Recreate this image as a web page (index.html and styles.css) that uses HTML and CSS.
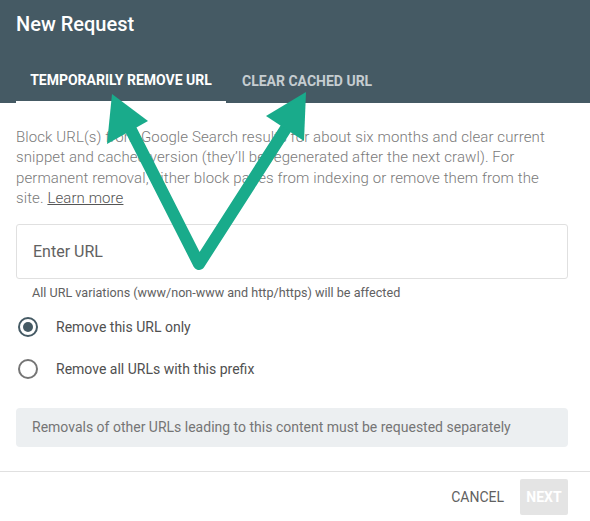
FILE: index.html
```html
<!DOCTYPE html>
<html lang="en">
<head>
<meta charset="UTF-8">
<meta name="viewport" content="width=device-width, initial-scale=1.0">
<title>New Request</title>
<link rel="stylesheet" href="styles.css">
</head>
<body>
<div class="dialog">
  <div class="header">
    <h1>New Request</h1>
    <div class="tabs">
      <div class="tab active">Temporarily remove URL</div>
      <div class="tab">Clear cached URL</div>
    </div>
  </div>

  <div class="content">
    <p class="intro">Block URL(s) from Google Search results for about six months and clear current snippet and cached version (they’ll be regenerated after the next crawl). For permanent removal, either block pages from indexing or remove them from the site. <a href="#">Learn more</a></p>

    <div class="url-field">Enter URL</div>
    <div class="hint">All URL variations (www/non-www and http/https) will be affected</div>

    <div class="options">
      <label class="radio-row"><span class="radio checked"></span>Remove this URL only</label>
      <label class="radio-row"><span class="radio"></span>Remove all URLs with this prefix</label>
    </div>

    <div class="notice">Removals of other URLs leading to this content must be requested separately</div>
  </div>

  <div class="footer">
    <button class="btn-text">Cancel</button>
    <button class="btn-next">Next</button>
  </div>
</div>

<!-- annotation arrows drawn over the dialog -->
<svg class="arrows" width="590" height="521" viewBox="0 0 590 521">
  <polyline points="128,124 199,264 290,122" fill="none" stroke="#19ab8b" stroke-width="12" stroke-linejoin="round" stroke-linecap="round"/>
  <polygon points="112,94 148,121 107,144" fill="#19ab8b"/>
  <polygon points="306,92 304,141 266,116" fill="#19ab8b"/>
</svg>
</body>
</html>
```
FILE: styles.css
```css
body {
  margin: 0;
  padding: 0;
  font-family: Roboto, "Liberation Sans", sans-serif;
  background-color: #fff;
}
.dialog {
  width: 590px;
  height: 521px;
  display: flex;
  flex-direction: column;
}
.header {
  background-color: #455a64;
  padding: 0 16px;
  height: 103px;
  display: flex;
  flex-direction: column;
  justify-content: space-between;
}
h1 {
  margin: 0;
  padding-top: 12px;
  font-size: 20px;
  font-weight: 500;
  color: #fff;
  line-height: 24px;
}
.tabs {
  display: flex;
}
.tab {
  text-transform: uppercase;
  font-size: 14px;
  font-weight: 700;
  color: #c5cdd1;
  padding: 0 16px;
  height: 46px;
  line-height: 48px;
  box-sizing: border-box;
}
.tab.active {
  color: #fff;
  width: 210px;
  text-align: center;
  padding: 0;
  border-bottom: 2px solid #fff;
  line-height: 46px;
}
.content {
  padding: 0 22px 0 16px;
  flex: 1;
}
.intro {
  margin: 24px 0 0;
  font-size: 15px;
  font-weight: 300;
  letter-spacing: 0.1px;
  line-height: 20.4px;
  color: #7a7a7a;
}
.intro a {
  color: #555;
}
.url-field {
  margin-top: 15px;
  height: 55px;
  box-sizing: border-box;
  border: 1px solid #e0e0e0;
  border-radius: 3px;
  padding: 0 16px;
  line-height: 53px;
  font-size: 16px;
  color: #616161;
}
.hint {
  font-size: 12.6px;
  color: #616161;
  padding-left: 16px;
  margin-top: 6px;
}
.options {
  margin-top: 6px;
}
.radio-row {
  display: flex;
  align-items: center;
  height: 42px;
  font-size: 14px;
  color: #505050;
}
.radio {
  width: 20px;
  height: 20px;
  border: 2px solid #757575;
  border-radius: 50%;
  margin: 0 18px 0 2px;
  box-sizing: border-box;
  position: relative;
}
.radio.checked {
  border-color: #455a64;
}
.radio.checked::after {
  content: "";
  position: absolute;
  left: 3px;
  top: 3px;
  width: 10px;
  height: 10px;
  border-radius: 50%;
  background-color: #455a64;
}
.notice {
  margin-top: 18px;
  background-color: #eceff1;
  border-radius: 4px;
  height: 39px;
  line-height: 39px;
  padding: 0 16px;
  font-size: 14px;
  color: #757575;
}
.footer {
  border-top: 1px solid #e0e0e0;
  height: 49px;
  display: flex;
  justify-content: flex-end;
  align-items: center;
  padding: 0 22px 0 16px;
  gap: 16px;
}
.footer button {
  font-family: Roboto, "Liberation Sans", sans-serif;
  font-size: 14px;
  text-transform: uppercase;
  border: none;
  cursor: pointer;
}
.btn-text {
  background: none;
  color: #616161;
  padding: 0;
}
.btn-next {
  background-color: #e4e4e4;
  color: #fff;
  font-weight: 700;
  width: 48px;
  height: 36px;
  border-radius: 2px;
}
.arrows {
  position: absolute;
  left: 0;
  top: 0;
  pointer-events: none;
}
```
